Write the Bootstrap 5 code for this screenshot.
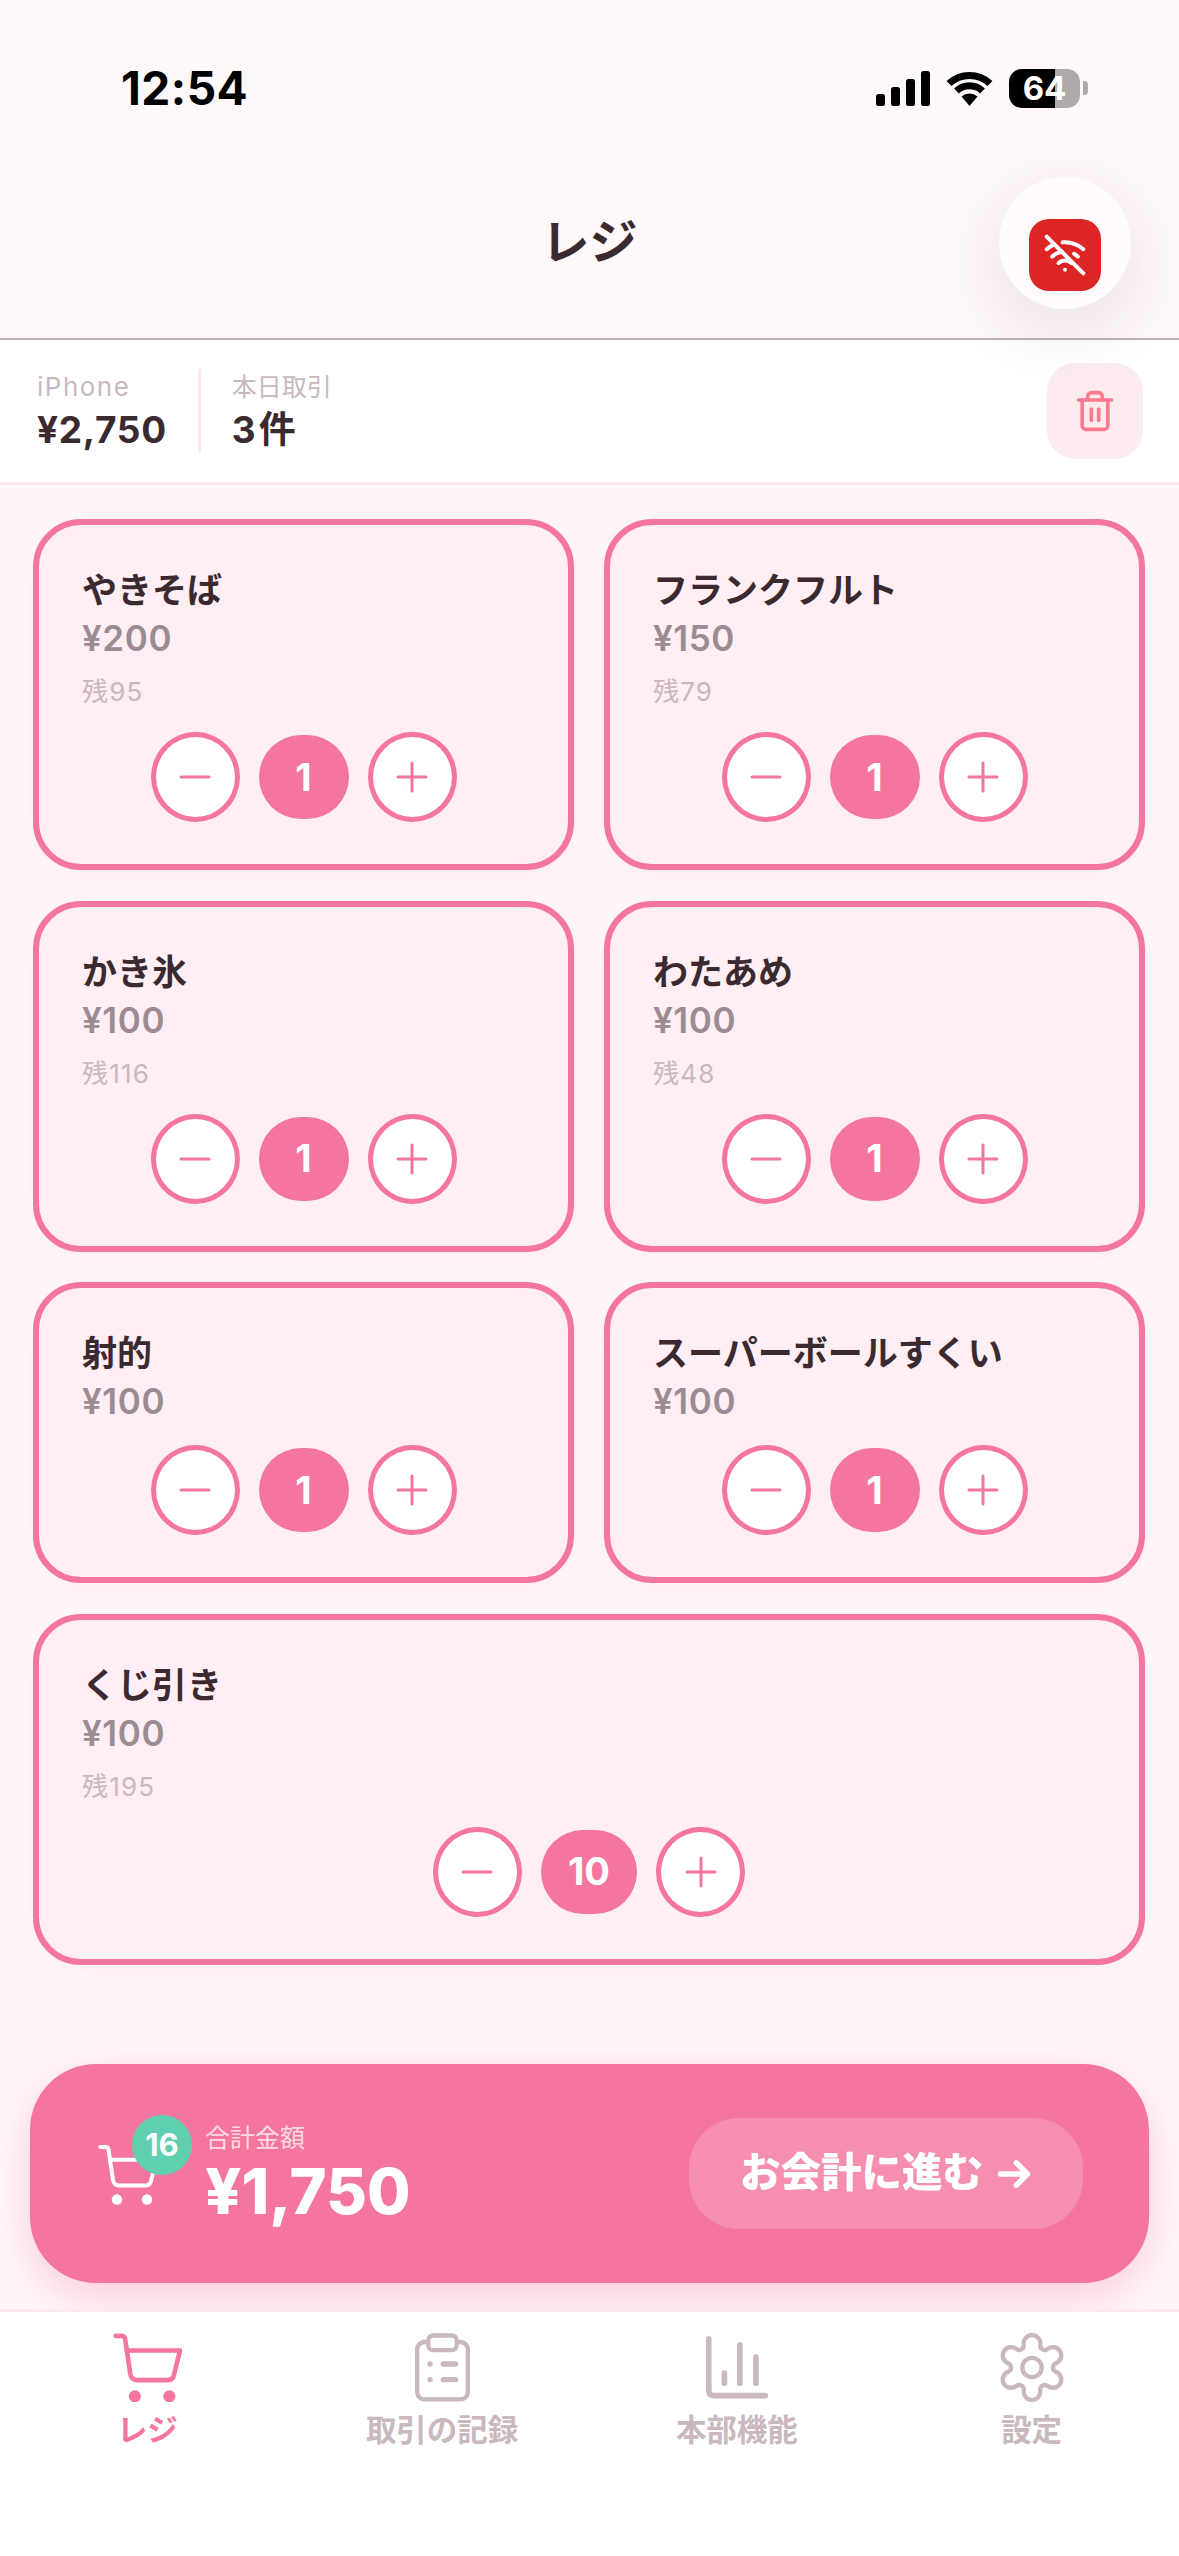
<!DOCTYPE html>
<html lang="ja">
<head>
    <meta charset="UTF-8">
    <meta name="viewport" content="width=device-width, initial-scale=1.0">
    <title>レジ</title>
    <link href="https://cdn.jsdelivr.net/npm/bootstrap@5.3.0/dist/css/bootstrap.min.css" rel="stylesheet">
    <style>
        :root {
            --pink: #f4769e;
            --ink: #3a2a30;
            --muted: #c9b8be;
        }
        body {
            width: 1179px;
            height: 2556px;
            overflow: hidden;
            background-color: #fff7f8;
            color: var(--ink);
            font-family: Inter, "Noto Sans CJK JP", sans-serif;
        }
        .page-wrap { height: 2556px; position: relative; }
        .app-head { background-color: #fff8f8; height: 340px; border-bottom: 2px solid #b9b4b4; }
        .status-line { height: 176px; padding: 0 91px 0 121px; }
        .clock { font-size: 46px; font-weight: 700; color: #000; font-family: Inter, sans-serif; letter-spacing: .5px; }
        .batt {
            width: 71px; height: 39px; border-radius: 13px; color: #fff;
            background: linear-gradient(90deg, #000 65%, #aeaaaa 65%);
            font-size: 33px; font-weight: 700; line-height: 39px; text-align: center;
        }
        .batt-nub { width: 5px; height: 14px; background: #aeaaaa; border-radius: 0 4px 4px 0; margin-left: 3px; }
        .page-title { font-size: 48px; font-weight: 700; line-height: 60px; padding-top: 36px; }
        .wifi-fab {
            position: absolute; left: 999px; top: 177px; width: 132px; height: 132px; padding-top: 42px;
            background: #fffbfc; border-radius: 50%; box-shadow: 0 20px 70px rgba(60, 40, 45, .11); z-index: 3;
        }
        .wifi-box { width: 72px; height: 72px; border-radius: 20px; background: #dc2626; }
        .info-bar { height: 145px; background: #fff; border-bottom: 3px solid #fbe9ed; padding: 0 36px 0 37px; }
        .info-label { font-size: 25px; line-height: 34px; color: var(--muted); }
        .info-label-latin { font-size: 26px; letter-spacing: 1.500px; }
        .info-value { font-size: 37px; line-height: 46px; font-weight: 700; margin-top: 3px; letter-spacing: .7px; }
        .info-unit { letter-spacing: 3px; }
        .info-sep { width: 3px; height: 84px; background: #fbe9ed; margin: 0 31px 0 31px; }
        .trash-btn { width: 96px; height: 96px; background: #fdecef; border: 0; border-radius: 28px; padding: 0; }
        .goods-area { padding: 34px 34px 0 33px; }
        .goods-row { --bs-gutter-x: 30px; --bs-gutter-y: 30.600px; }
        .goods-card {
            background: #ffeef3; border: 6px solid var(--pink); border-radius: 48px;
            padding: 44px 43px 42px; box-shadow: 0 6px 24px rgba(244, 118, 158, .08);
        }
        .goods-name { font-size: 35px; line-height: 42px; font-weight: 600; }
        .goods-price { font-size: 35px; line-height: 42px; font-weight: 600; color: #9b8b92; margin-top: 6px; letter-spacing: .6px; }
        .goods-left { font-size: 26px; line-height: 34px; color: var(--muted); margin-top: 16px; letter-spacing: 1.200px; }
        .stepper { gap: 19px; margin-top: 23px; }
        .step-btn {
            width: 89px; height: 90px; background: #fff; border: 5px solid var(--pink);
            border-radius: 50%; padding: 0; line-height: 1;
        }
        .step-count {
            min-width: 90px; height: 84px; padding: 0 27px; border-radius: 42px; background: var(--pink);
            color: #fff; font-size: 38px; font-weight: 700;
        }
        .pay-wrap { padding: 0 30px 26px 30px; }
        .pay-panel {
            height: 219px; background: var(--pink); border-radius: 66px; padding: 0 66px 0 68px;
            box-shadow: 0 14px 44px rgba(244, 118, 158, .32);
        }
        .pay-cart { position: relative; width: 60px; height: 63px; margin-right: 47px; margin-top: 2px; }
        .cart-badge {
            position: absolute; left: 34px; top: -28px; width: 60px; height: 60px; border-radius: 50%;
            background: #5fcfb0; color: #fff; font-size: 31px; font-weight: 700;
        }
        .pay-label { font-size: 25px; line-height: 34px; color: #fdd9e4; }
        .pay-total { font-size: 63px; line-height: 70px; font-weight: 800; color: #fff; margin-top: 1px; }
        .pay-btn {
            width: 394px; height: 111px; background: rgba(255, 255, 255, .18); border: 0; border-radius: 50px;
            color: #fff; font-size: 40.500px; font-weight: 800; padding: 0; gap: 13px;
        }
        .tab-bar { height: 247px; background: #fff; border-top: 3px solid #fbe9ed; padding-top: 21px; }
        .tab-icon { height: 69px; }
        .tab-text { font-size: 30.500px; line-height: 40px; font-weight: 700; color: var(--muted); margin-top: 8px; }
        .tab-on .tab-text { color: var(--pink); }
    </style>
</head>
<body>
    <svg class="d-none">
        <symbol id="i-cart" viewBox="0 0 24 24">
            <path d="M.9 1H3Q4 1 4.2 2L6 14.2Q6.4 16.4 8.4 16.4H19Q20.8 16.4 21.2 14.6L23.3 6.1H4.7" fill="none" stroke="currentColor" stroke-width="1.6" stroke-linecap="round" stroke-linejoin="round"/>
            <circle cx="7.6" cy="22" r="2.1" fill="currentColor"/>
            <circle cx="19.6" cy="22" r="2.1" fill="currentColor"/>
        </symbol>
        <symbol id="i-minus" viewBox="0 0 40 40">
            <path d="M6 20H34" stroke="#f4769e" stroke-width="3" stroke-linecap="round"/>
        </symbol>
        <symbol id="i-plus" viewBox="0 0 40 40">
            <path d="M6 20H34M20 6V34" stroke="#f4769e" stroke-width="3" stroke-linecap="round"/>
        </symbol>
    </svg>

    <div class="page-wrap d-flex flex-column">
        <header class="app-head">
            <div class="status-line d-flex align-items-center justify-content-between">
                <span class="clock">12:54</span>
                <div class="d-flex align-items-center">
                    <svg width="54" height="35" viewBox="0 0 54 35" class="me-3">
                        <rect x="0" y="23" width="9" height="12" rx="2.5"/>
                        <rect x="15" y="16" width="9" height="19" rx="2.5"/>
                        <rect x="30" y="8" width="9" height="27" rx="2.5"/>
                        <rect x="45" y="0" width="9" height="35" rx="2.5"/>
                    </svg>
                    <svg width="47" height="35" viewBox="0 0 47 35" class="me-3">
                        <path d="M3 12.500A30 30 0 0 1 44 12.500M10.500 20A19 19 0 0 1 36.500 20" fill="none" stroke="#000" stroke-width="7"/>
                        <path d="M15.500 25.500A12 12 0 0 1 31.500 25.500L23.500 35Z"/>
                    </svg>
                    <div class="batt">64</div>
                    <div class="batt-nub"></div>
                </div>
            </div>
            <div class="page-title text-center">レジ</div>
        </header>

        <div class="wifi-fab d-flex justify-content-center">
            <div class="wifi-box d-flex align-items-center justify-content-center">
                <svg width="44" height="44" viewBox="0 0 24 24" fill="none" stroke="#fff" stroke-width="2.200" stroke-linecap="round" stroke-linejoin="round">
                    <path d="M12 20h.01"/>
                    <path d="M8.500 16.429a5 5 0 0 1 7 0"/>
                    <path d="M5 12.859a10 10 0 0 1 5.170-2.690"/>
                    <path d="M19 12.859a10 10 0 0 0-2.007-1.523"/>
                    <path d="M2 8.820a15 15 0 0 1 4.177-2.643"/>
                    <path d="M22 8.820a15 15 0 0 0-11.288-3.764"/>
                    <path d="m2 2 20 20"/>
                </svg>
            </div>
        </div>

        <section class="info-bar d-flex align-items-center">
            <div>
                <div class="info-label info-label-latin">iPhone</div>
                <div class="info-value">¥2,750</div>
            </div>
            <div class="info-sep"></div>
            <div>
                <div class="info-label">本日取引</div>
                <div class="info-value info-unit">3件</div>
            </div>
            <button class="trash-btn btn ms-auto d-flex align-items-center justify-content-center" type="button">
                <svg width="44" height="44" viewBox="0 0 24 24" fill="none" stroke="#fb7a8e" stroke-width="2" stroke-linecap="round" stroke-linejoin="round">
                    <path d="M3 6h18"/>
                    <path d="M19 6v14c0 1-1 2-2 2H7c-1 0-2-1-2-2V6"/>
                    <path d="M8 6V4c0-1 1-2 2-2h4c1 0 2 1 2 2v2"/>
                    <path d="M10 11v6"/>
                    <path d="M14 11v6"/>
                </svg>
            </button>
        </section>

        <main class="goods-area flex-grow-1">
            <div class="row goods-row">
                <div class="col-6">
                    <div class="card goods-card">
                        <div class="goods-name">やきそば</div>
                        <div class="goods-price">¥200</div>
                        <div class="goods-left">残95</div>
                        <div class="stepper d-flex justify-content-center align-items-center">
                            <button class="step-btn btn" type="button"><svg width="40" height="40"><use href="#i-minus"/></svg></button>
                            <div class="step-count d-flex align-items-center justify-content-center">1</div>
                            <button class="step-btn btn" type="button"><svg width="40" height="40"><use href="#i-plus"/></svg></button>
                        </div>
                    </div>
                </div>
                <div class="col-6">
                    <div class="card goods-card">
                        <div class="goods-name">フランクフルト</div>
                        <div class="goods-price">¥150</div>
                        <div class="goods-left">残79</div>
                        <div class="stepper d-flex justify-content-center align-items-center">
                            <button class="step-btn btn" type="button"><svg width="40" height="40"><use href="#i-minus"/></svg></button>
                            <div class="step-count d-flex align-items-center justify-content-center">1</div>
                            <button class="step-btn btn" type="button"><svg width="40" height="40"><use href="#i-plus"/></svg></button>
                        </div>
                    </div>
                </div>
                <div class="col-6">
                    <div class="card goods-card">
                        <div class="goods-name">かき氷</div>
                        <div class="goods-price">¥100</div>
                        <div class="goods-left">残116</div>
                        <div class="stepper d-flex justify-content-center align-items-center">
                            <button class="step-btn btn" type="button"><svg width="40" height="40"><use href="#i-minus"/></svg></button>
                            <div class="step-count d-flex align-items-center justify-content-center">1</div>
                            <button class="step-btn btn" type="button"><svg width="40" height="40"><use href="#i-plus"/></svg></button>
                        </div>
                    </div>
                </div>
                <div class="col-6">
                    <div class="card goods-card">
                        <div class="goods-name">わたあめ</div>
                        <div class="goods-price">¥100</div>
                        <div class="goods-left">残48</div>
                        <div class="stepper d-flex justify-content-center align-items-center">
                            <button class="step-btn btn" type="button"><svg width="40" height="40"><use href="#i-minus"/></svg></button>
                            <div class="step-count d-flex align-items-center justify-content-center">1</div>
                            <button class="step-btn btn" type="button"><svg width="40" height="40"><use href="#i-plus"/></svg></button>
                        </div>
                    </div>
                </div>
                <div class="col-6">
                    <div class="card goods-card">
                        <div class="goods-name">射的</div>
                        <div class="goods-price">¥100</div>
                        <div class="stepper d-flex justify-content-center align-items-center">
                            <button class="step-btn btn" type="button"><svg width="40" height="40"><use href="#i-minus"/></svg></button>
                            <div class="step-count d-flex align-items-center justify-content-center">1</div>
                            <button class="step-btn btn" type="button"><svg width="40" height="40"><use href="#i-plus"/></svg></button>
                        </div>
                    </div>
                </div>
                <div class="col-6">
                    <div class="card goods-card">
                        <div class="goods-name">スーパーボールすくい</div>
                        <div class="goods-price">¥100</div>
                        <div class="stepper d-flex justify-content-center align-items-center">
                            <button class="step-btn btn" type="button"><svg width="40" height="40"><use href="#i-minus"/></svg></button>
                            <div class="step-count d-flex align-items-center justify-content-center">1</div>
                            <button class="step-btn btn" type="button"><svg width="40" height="40"><use href="#i-plus"/></svg></button>
                        </div>
                    </div>
                </div>
                <div class="col-12">
                    <div class="card goods-card">
                        <div class="goods-name">くじ引き</div>
                        <div class="goods-price">¥100</div>
                        <div class="goods-left">残195</div>
                        <div class="stepper d-flex justify-content-center align-items-center">
                            <button class="step-btn btn" type="button"><svg width="40" height="40"><use href="#i-minus"/></svg></button>
                            <div class="step-count d-flex align-items-center justify-content-center">10</div>
                            <button class="step-btn btn" type="button"><svg width="40" height="40"><use href="#i-plus"/></svg></button>
                        </div>
                    </div>
                </div>
            </div>
        </main>

        <div class="pay-wrap">
            <div class="pay-panel d-flex align-items-center">
                <div class="pay-cart text-white">
                    <svg width="60" height="63"><use href="#i-cart"/></svg>
                    <div class="cart-badge d-flex align-items-center justify-content-center">16</div>
                </div>
                <div>
                    <div class="pay-label">合計金額</div>
                    <div class="pay-total">¥1,750</div>
                </div>
                <button class="pay-btn btn ms-auto d-flex align-items-center justify-content-center" type="button">
                    お会計に進む
                    <svg width="36" height="36" viewBox="0 0 24 24" fill="none" stroke="#fff" stroke-width="3.600" stroke-linecap="round" stroke-linejoin="round">
                        <path d="M3 12h18M13.500 4.500l7.500 7.500-7.500 7.500"/>
                    </svg>
                </button>
            </div>
        </div>

        <nav class="tab-bar row g-0">
            <div class="col-3 text-center tab-on">
                <div class="tab-icon" style="color: #f4769e"><svg width="69" height="69"><use href="#i-cart"/></svg></div>
                <div class="tab-text">レジ</div>
            </div>
            <div class="col-3 text-center">
                <div class="tab-icon">
                    <svg width="55" height="69" viewBox="0 0 165 205" fill="none" stroke="#c9b8be" stroke-width="13">
                        <rect x="6.500" y="26" width="152" height="172" rx="22"/>
                        <rect x="40" y="6.500" width="85" height="44" rx="14" fill="#fff"/>
                        <path d="M85 92H122M85 139H122" stroke-width="16" stroke-linecap="round"/>
                        <circle cx="45" cy="92" r="8" fill="#c9b8be" stroke="none"/>
                        <circle cx="45" cy="139" r="8" fill="#c9b8be" stroke="none"/>
                    </svg>
                </div>
                <div class="tab-text">取引の記録</div>
            </div>
            <div class="col-3 text-center">
                <div class="tab-icon">
                    <svg width="62" height="69" viewBox="140 70 185 206" fill="none" stroke="#c9b8be" stroke-width="17" stroke-linecap="round">
                        <path d="M148 88V240Q148 257 165 257H317"/>
                        <path d="M195 190V220M241 105V220M289 142V220"/>
                    </svg>
                </div>
                <div class="tab-text">本部機能</div>
            </div>
            <div class="col-3 text-center">
                <div class="tab-icon">
                    <svg width="64" height="69" viewBox="-96 -103 192 206" fill="none" stroke="#c9b8be" stroke-width="13">
                        <path d="M-24.700 -68.500A25 25 0 1 1 24.700 -68.500A13.800 13.800 0 0 0 46.970 -55.640A25 25 0 1 1 71.670 -12.860A13.800 13.800 0 0 0 71.670 12.860A25 25 0 1 1 46.970 55.640A13.800 13.800 0 0 0 24.700 68.500A25 25 0 1 1 -24.700 68.500A13.800 13.800 0 0 0 -46.970 55.640A25 25 0 1 1 -71.670 12.860A13.800 13.800 0 0 0 -71.670 -12.860A25 25 0 1 1 -46.970 -55.640A13.800 13.800 0 0 0 -24.700 -68.500Z"/>
                        <circle r="29"/>
                    </svg>
                </div>
                <div class="tab-text">設定</div>
            </div>
        </nav>
    </div>
</body>
</html>
